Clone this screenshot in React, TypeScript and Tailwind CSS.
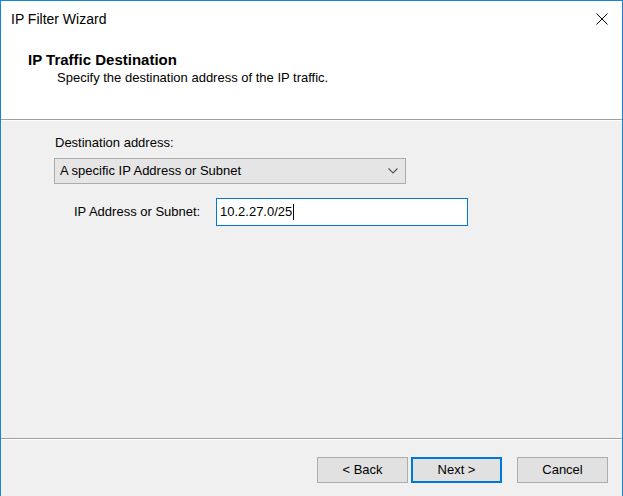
import React from 'react';

const font = { fontFamily: '"Liberation Sans", Arial, sans-serif' };

/* ---------------------------------------------------
   SMALL PIECES
----------------------------------------------------*/
const CloseIcon = () => (
  <svg width="12" height="12" viewBox="0 0 12 12" className="mt-[2px] shrink-0">
    <path d="M0.5 0.5 L11.5 11.5 M11.5 0.5 L0.5 11.5" stroke="#000" strokeWidth="1" fill="none" />
  </svg>
);

const Chevron = () => (
  <svg width="10" height="6" viewBox="0 0 10 6" className="shrink-0">
    <path d="M0.5 0.5 L5 5 L9.5 0.5" stroke="#5a5a5a" strokeWidth="1.2" fill="none" />
  </svg>
);

const WizButton: React.FC<{ label: string; primary?: boolean; className?: string }> = ({ label, primary, className }) => (
  <div
    className={`w-[91px] h-[26px] flex items-center justify-center bg-[#e1e1e1] text-[13px] leading-[16px] text-black ${
      primary ? 'border-2 border-[#0078d7]' : 'border border-[#adadad]'
    } ${className ?? ''}`}
  >
    {label}
  </div>
);

/* ---------------------------------------------------
   MAIN
----------------------------------------------------*/
const App: React.FC = () => {
  return (
    <div
      style={font}
      className="w-[623px] h-[496px] overflow-hidden bg-[#f0f0f0] border-x border-t border-[#1883d7] flex flex-col text-black"
    >
      {/* HEADER */}
      <div className="h-[118px] bg-white flex flex-col shrink-0">
        {/* title bar */}
        <div className="flex items-start justify-between pt-[10px] pl-[10px] pr-[14px]">
          <span className="text-[14px] leading-[17px]">IP Filter Wizard</span>
          <CloseIcon />
        </div>

        {/* page title */}
        <div className="pl-[27px] mt-[23px]">
          <div className="text-[15px] leading-[18px] font-bold">IP Traffic Destination</div>
          <div className="pl-[29px] mt-[1px] text-[13px] leading-[16px]">
            Specify the destination address of the IP traffic.
          </div>
        </div>
      </div>
      <div className="h-px bg-[#a0a0a0] shrink-0" />
      <div className="h-px bg-white shrink-0" />

      {/* BODY */}
      <div className="flex-1 pl-[53px] pt-[14px]">
        <div className="text-[13px] leading-[16px] pl-px">Destination address:</div>

        {/* combo */}
        <div className="mt-[7px] w-[352px] h-[26px] bg-[#e5e5e5] border border-[#acacac] flex items-center justify-between pl-[5px] pr-[7px]">
          <span className="text-[13px] leading-[16px]">A specific IP Address or Subnet</span>
          <Chevron />
        </div>

        {/* ip row */}
        <div className="mt-[14px] flex items-center pl-[20px]">
          <span className="w-[142px] text-[13px] leading-[16px]">IP Address or Subnet:</span>
          <div className="w-[252px] h-[28px] bg-white border border-[#0078d7] flex items-center pl-[3px]">
            <span className="text-[13px] leading-[16px]">10.2.27.0/25</span>
            <span className="inline-block w-px h-[16px] bg-black ml-px" />
          </div>
        </div>
      </div>

      {/* FOOTER */}
      <div className="h-px bg-[#a0a0a0] shrink-0" />
      <div className="h-px bg-white shrink-0" />
      <div className="h-[56px] shrink-0 flex justify-end items-start pt-[17px] pr-[14px]">
        <WizButton label="< Back" />
        <WizButton label="Next >" primary className="ml-[3px]" />
        <WizButton label="Cancel" className="ml-[15px]" />
      </div>
    </div>
  );
};

export default App;
